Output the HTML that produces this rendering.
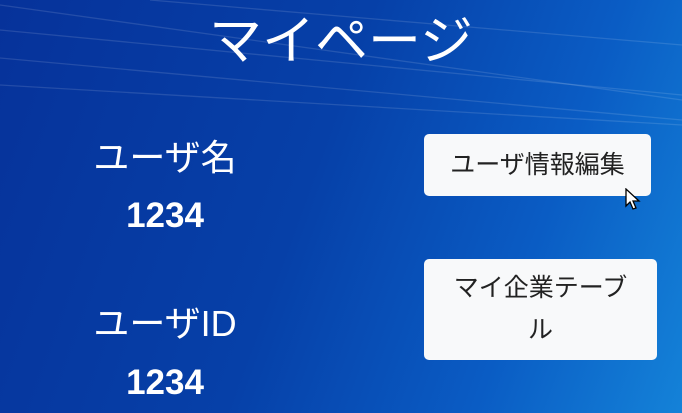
<!DOCTYPE html>
<html><head><meta charset="utf-8"><style>
body{margin:0;width:682px;height:413px;overflow:hidden;position:relative;
background:linear-gradient(110deg,#06329a 0%,#0640a8 45%,#0a5cc4 75%,#1482d8 100%);
font-family:"Liberation Sans","Noto Sans CJK JP",sans-serif;color:#fff}
.t{position:absolute;white-space:nowrap;text-align:center}
.btn{position:absolute;background:#f8f9fa;border-radius:5px;color:#222;font-size:25px;text-align:center;line-height:42px;box-sizing:border-box}
</style></head><body>
<svg width="682" height="413" style="position:absolute;left:0;top:0">
<g stroke="rgba(255,255,255,0.12)" stroke-width="1.3" fill="none">
<line x1="0" y1="5" x2="682" y2="100"/>
<line x1="0" y1="30" x2="682" y2="95"/>
<line x1="0" y1="58" x2="682" y2="120"/>
<line x1="0" y1="85" x2="682" y2="125"/>
<line x1="150" y1="0" x2="682" y2="45"/>
</g></svg>
<div class="t" style="left:0;width:682px;top:10px;font-size:53px;line-height:64px">マイページ</div>
<div class="t" style="left:65px;width:200px;top:136px;font-size:36px;line-height:44px">ユーザ名</div>
<div class="t" style="left:65px;width:200px;top:194px;font-size:35px;font-weight:bold;line-height:44px">1234</div>
<div class="t" style="left:65px;width:200px;top:302px;font-size:36px;line-height:44px">ユーザID</div>
<div class="t" style="left:65px;width:200px;top:361px;font-size:35px;font-weight:bold;line-height:44px">1234</div>
<div class="btn" style="left:424px;top:134px;width:227px;height:62px;padding-top:10px">ユーザ情報編集</div>
<div class="btn" style="left:424px;top:259px;width:233px;height:101px;padding-top:8px">マイ企業テーブ<br>ル</div>
<svg width="20" height="24" style="position:absolute;left:624px;top:188px"><path d="M2 1 L2 18 L6 14 L9 21 L12 20 L9 13 L15 13 Z" fill="#fff" stroke="#000" stroke-width="1.3"/></svg>
</body></html>
